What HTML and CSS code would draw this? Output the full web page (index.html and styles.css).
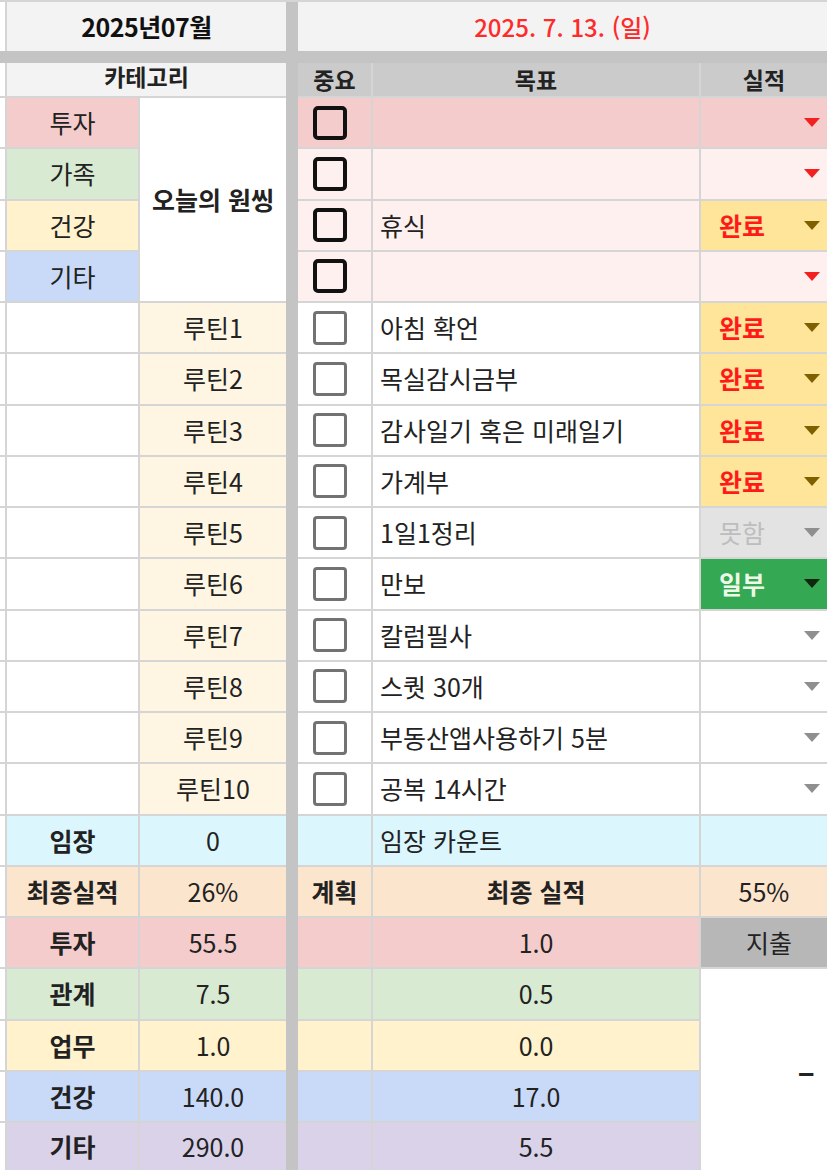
FILE: index.html
```html
<!DOCTYPE html>
<html lang="ko">
<head>
    <meta charset="UTF-8">
    <meta name="viewport" content="width=device-width, initial-scale=1.0">
    <title>2025년07월 루틴 시트</title>
    <link rel="stylesheet" href="styles.css">
</head>
<body>
    <div class="sheet">
        <div class="sep"></div>
        <div class="band"></div>

        <!-- 제목 줄 -->
        <div class="cell edge"></div>
        <div class="cell title wide">2025년07월</div>
        <div class="cell title date full">2025. 7. 13. (일)</div>

        <!-- 머리글 -->
        <div class="cell edge"></div>
        <div class="cell head cat wide">카테고리</div>
        <div class="cell head">중요</div>
        <div class="cell head">목표</div>
        <div class="cell head">실적</div>

        <!-- 오늘의 원씽 -->
        <div class="cell edge"></div>
        <div class="cell pink">투자</div>
        <div class="cell onething">오늘의 원씽</div>
        <div class="cell pink check"><span class="box strong"></span></div>
        <div class="cell pink left"></div>
        <div class="cell pink result"><i class="arrow red"></i></div>

        <div class="cell edge"></div>
        <div class="cell green">가족</div>
        <div class="cell blush check"><span class="box strong"></span></div>
        <div class="cell blush left"></div>
        <div class="cell blush result"><i class="arrow red"></i></div>

        <div class="cell edge"></div>
        <div class="cell yellow">건강</div>
        <div class="cell blush check"><span class="box strong"></span></div>
        <div class="cell blush left">휴식</div>
        <div class="cell done result">완료<i class="arrow olive"></i></div>

        <div class="cell edge"></div>
        <div class="cell blue">기타</div>
        <div class="cell blush check"><span class="box strong"></span></div>
        <div class="cell blush left"></div>
        <div class="cell blush result"><i class="arrow red"></i></div>

        <!-- 루틴 -->
        <div class="cell edge"></div>
        <div class="cell"></div>
        <div class="cell cream">루틴1</div>
        <div class="cell check"><span class="box"></span></div>
        <div class="cell left">아침 확언</div>
        <div class="cell done result">완료<i class="arrow olive"></i></div>

        <div class="cell edge"></div>
        <div class="cell"></div>
        <div class="cell cream">루틴2</div>
        <div class="cell check"><span class="box"></span></div>
        <div class="cell left">목실감시금부</div>
        <div class="cell done result">완료<i class="arrow olive"></i></div>

        <div class="cell edge"></div>
        <div class="cell"></div>
        <div class="cell cream">루틴3</div>
        <div class="cell check"><span class="box"></span></div>
        <div class="cell left">감사일기 혹은 미래일기</div>
        <div class="cell done result">완료<i class="arrow olive"></i></div>

        <div class="cell edge"></div>
        <div class="cell"></div>
        <div class="cell cream">루틴4</div>
        <div class="cell check"><span class="box"></span></div>
        <div class="cell left">가계부</div>
        <div class="cell done result">완료<i class="arrow olive"></i></div>

        <div class="cell edge"></div>
        <div class="cell"></div>
        <div class="cell cream">루틴5</div>
        <div class="cell check"><span class="box"></span></div>
        <div class="cell left">1일1정리</div>
        <div class="cell missed result">못함<i class="arrow"></i></div>

        <div class="cell edge"></div>
        <div class="cell"></div>
        <div class="cell cream">루틴6</div>
        <div class="cell check"><span class="box"></span></div>
        <div class="cell left">만보</div>
        <div class="cell partial result">일부<i class="arrow dark"></i></div>

        <div class="cell edge"></div>
        <div class="cell"></div>
        <div class="cell cream">루틴7</div>
        <div class="cell check"><span class="box"></span></div>
        <div class="cell left">칼럼필사</div>
        <div class="cell result"><i class="arrow"></i></div>

        <div class="cell edge"></div>
        <div class="cell"></div>
        <div class="cell cream">루틴8</div>
        <div class="cell check"><span class="box"></span></div>
        <div class="cell left">스퀏 30개</div>
        <div class="cell result"><i class="arrow"></i></div>

        <div class="cell edge"></div>
        <div class="cell"></div>
        <div class="cell cream">루틴9</div>
        <div class="cell check"><span class="box"></span></div>
        <div class="cell left">부동산앱사용하기 5분</div>
        <div class="cell result"><i class="arrow"></i></div>

        <div class="cell edge"></div>
        <div class="cell"></div>
        <div class="cell cream">루틴10</div>
        <div class="cell check"><span class="box"></span></div>
        <div class="cell left">공복 14시간</div>
        <div class="cell result"><i class="arrow"></i></div>

        <!-- 임장 / 실적 -->
        <div class="cell edge"></div>
        <div class="cell cyan bold">임장</div>
        <div class="cell cyan">0</div>
        <div class="cell cyan"></div>
        <div class="cell cyan left">임장 카운트</div>
        <div class="cell cyan"></div>

        <div class="cell edge"></div>
        <div class="cell peach bold">최종실적</div>
        <div class="cell peach">26%</div>
        <div class="cell peach bold">계획</div>
        <div class="cell peach bold">최종 실적</div>
        <div class="cell peach">55%</div>

        <div class="cell edge"></div>
        <div class="cell pink bold">투자</div>
        <div class="cell pink">55.5</div>
        <div class="cell pink"></div>
        <div class="cell pink">1.0</div>
        <div class="cell spend">지출</div>

        <div class="cell edge"></div>
        <div class="cell green bold">관계</div>
        <div class="cell green">7.5</div>
        <div class="cell green"></div>
        <div class="cell green">0.5</div>
        <div class="cell total">–</div>

        <div class="cell edge"></div>
        <div class="cell yellow bold">업무</div>
        <div class="cell yellow">1.0</div>
        <div class="cell yellow"></div>
        <div class="cell yellow">0.0</div>

        <div class="cell edge"></div>
        <div class="cell blue bold">건강</div>
        <div class="cell blue">140.0</div>
        <div class="cell blue"></div>
        <div class="cell blue">17.0</div>

        <div class="cell edge"></div>
        <div class="cell purple bold">기타</div>
        <div class="cell purple">290.0</div>
        <div class="cell purple"></div>
        <div class="cell purple">5.5</div>
    </div>
</body>
</html>
```

FILE: styles.css
```css
html, body {
    margin: 0;
    overflow: hidden;
}
body {
    font-family: "Noto Sans CJK KR", "Noto Sans", sans-serif;
    background: #fff;
}
.sheet {
    display: grid;
    grid-template-columns: 5px 131px 146px 8px 73px 326px 1fr;
    grid-template-rows: 49px 8px 33px repeat(20, 49.25px) 47px;
    gap: 2px;
    padding-top: 2px;
    height: 1170px;
    box-sizing: border-box;
    background: #d5d5d5; /* 눈금선 */
}
.sep {
    grid-column: 4;
    grid-row: 1 / -1;
    margin: 0 -2px;
    background: #c4c4c4;
}
.band {
    grid-column: 1 / -1;
    grid-row: 2;
    margin: -2px 0;
    background: #c4c4c4;
}
.cell {
    display: flex;
    align-items: center;
    justify-content: center;
    background: #fff;
    color: #222;
    font-size: 25px;
    line-height: 1;
    white-space: nowrap;
    overflow: hidden;
}
.wide { grid-column: span 2; }
.full { grid-column: span 3; }
.bold { font-weight: 700; }
.left {
    justify-content: flex-start;
    padding-left: 7px;
}

.title {
    background: #f3f3f3;
    font-size: 25px;
    font-weight: 700;
    letter-spacing: -0.5px;
    color: #111;
}
.date {
    color: #ff2b2b;
    font-size: 24px;
    font-weight: 500;
    letter-spacing: 0;
}
.head {
    background: #cbcbcb;
    font-size: 23px;
    font-weight: 700;
    overflow: visible;
}
.head.cat {
    background: #f3f3f3;
    padding-bottom: 6px;
}

.onething {
    grid-row: span 4;
    font-weight: 700;
}

/* 배경색 */
.pink { background: #f4cccc; }
.blush { background: #fff0f0; }
.green { background: #d9ead3; }
.yellow { background: #fff2cc; }
.blue { background: #c9daf8; }
.purple { background: #d9d2e9; }
.cream { background: #fef6e2; }
.cyan { background: #dbf7fd; }
.peach { background: #fce5cd; }

/* 체크박스 */
.check {
    justify-content: flex-start;
    padding-left: 15px;
}
.box {
    width: 34px;
    height: 34px;
    box-sizing: border-box;
    border: 3px solid #727272;
    border-radius: 4px;
    background: #fff;
}
.pink .box, .blush .box {
    background: transparent;
}
.box.strong {
    border: 4px solid #111;
    border-radius: 5px;
}

/* 실적 드롭다운 */
.result {
    justify-content: flex-start;
    padding: 0 7px 0 18px;
    font-weight: 700;
}
.arrow {
    margin-left: auto;
    width: 0;
    height: 0;
    border-left: 8px solid transparent;
    border-right: 8px solid transparent;
    border-top: 9px solid #8f8f8f;
}
.arrow.red { border-top-color: #f32020; }
.arrow.olive { border-top-color: #7f6000; }
.arrow.dark { border-top-color: #10260f; }

.done {
    background: #ffe599;
    color: #ff1a1a;
}
.missed {
    background: #e3e3e3;
    color: #bdbdbd;
    font-weight: 400;
}
.partial {
    background: #34a853;
    color: #eef8e8;
}

.spend {
    background: #b7b7b7;
    padding-left: 10px;
}
.total {
    grid-row: span 4;
    justify-content: flex-end;
    padding-right: 12px;
    font-weight: 700;
    font-size: 32px;
}
```
